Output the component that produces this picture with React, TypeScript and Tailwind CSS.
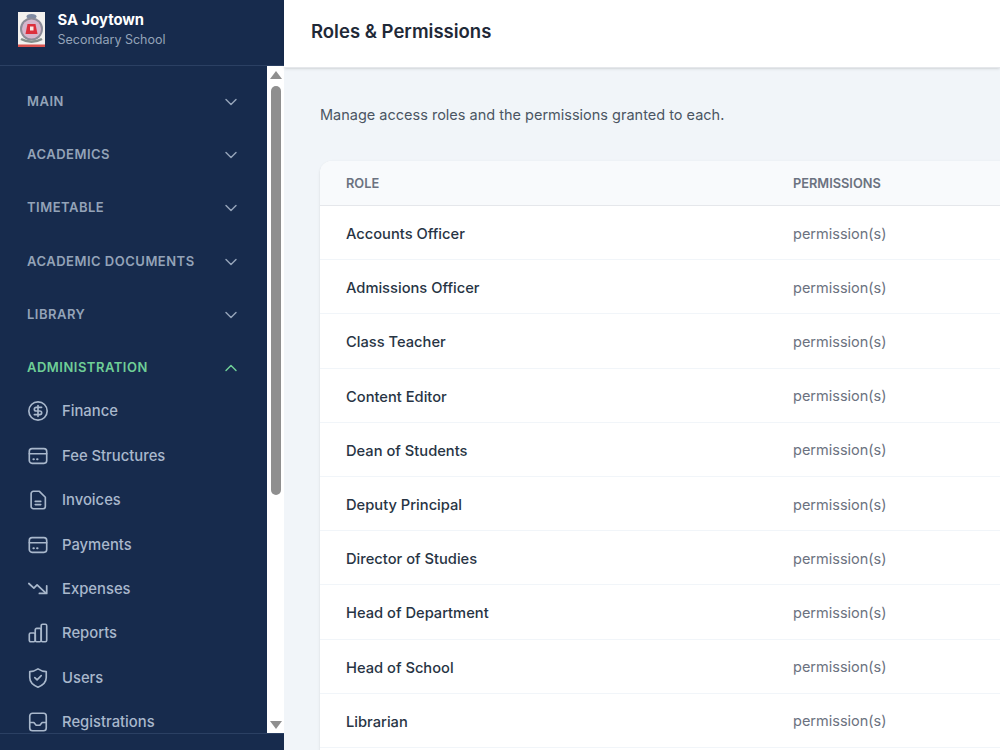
import { ChevronDown, ChevronUp, CircleDollarSign } from 'lucide-react'
import type { ReactNode } from 'react'

const sections = ['MAIN', 'ACADEMICS', 'TIMETABLE', 'ACADEMIC DOCUMENTS', 'LIBRARY']

const roles = [
  'Accounts Officer',
  'Admissions Officer',
  'Class Teacher',
  'Content Editor',
  'Dean of Students',
  'Deputy Principal',
  'Director of Studies',
  'Head of Department',
  'Head of School',
  'Librarian',
]

function CardIcon() {
  return (
    <svg viewBox="0 0 24 24" fill="none" stroke="currentColor" strokeWidth={1.8} strokeLinecap="round" className="size-[22px]">
      <rect x="2.500" y="4" width="19" height="16" rx="3" />
      <path d="M2.500 9.500h19" />
      <path d="M7 15.500h.5M11 15.500h.5" strokeWidth={2.2} />
    </svg>
  )
}

function DocIcon() {
  return (
    <svg viewBox="0 0 24 24" fill="none" stroke="currentColor" strokeWidth={1.8} strokeLinecap="round" strokeLinejoin="round" className="size-[22px]">
      <path d="M7 2.500h6.500L20 9v10a2.500 2.500 0 0 1-2.500 2.500h-10.500A2.500 2.500 0 0 1 4.500 19V5A2.500 2.500 0 0 1 7 2.500z" />
      <path d="M9 13.500h6M9 17h6" />
    </svg>
  )
}

function ExpensesIcon() {
  return (
    <svg viewBox="0 0 24 24" fill="none" stroke="currentColor" strokeWidth={1.9} strokeLinecap="round" strokeLinejoin="round" className="size-[22px]">
      <path d="M2 6l5.500 5 3.500-3.500 9 8.500" />
      <path d="M21.500 8.500v8.300h-8" />
    </svg>
  )
}

function BarsIcon() {
  return (
    <svg viewBox="0 0 24 24" fill="none" stroke="currentColor" strokeWidth={1.8} strokeLinejoin="round" className="size-[22px]">
      <rect x="2.500" y="12" width="6.500" height="9.500" rx="1.500" />
      <rect x="9" y="7" width="6.500" height="14.500" rx="1.500" />
      <rect x="15.500" y="2.500" width="6" height="19" rx="1.500" />
    </svg>
  )
}

function ShieldIcon() {
  return (
    <svg viewBox="0 0 24 24" fill="none" stroke="currentColor" strokeWidth={1.8} strokeLinecap="round" strokeLinejoin="round" className="size-[22px]">
      <path d="M12 2C9 4 6 5 3 5v6.500C3 16.500 7 20 12 22c5-2 9-5.500 9-10.500V5c-3 0-6-1-9-3z" />
      <path d="M8.500 11.500l2.500 2.500 4.500-4.500" />
    </svg>
  )
}

function InboxIcon() {
  return (
    <svg viewBox="0 0 24 24" fill="none" stroke="currentColor" strokeWidth={1.8} strokeLinejoin="round" strokeLinecap="round" className="size-[22px]">
      <rect x="3" y="2.500" width="18" height="19" rx="3" />
      <path d="M3 12.500h4.500l2.500 3h4l2.500-3H21" />
    </svg>
  )
}

function Crest() {
  return (
    <svg viewBox="0 0 27 35" className="h-[35px] w-[27px] shrink-0">
      <rect width="27" height="35" fill="#f3f1ee" />
      <ellipse cx="13.500" cy="4.500" rx="5" ry="2.500" fill="#7f8ba3" />
      <circle cx="13.500" cy="17" r="11.500" fill="#8d8c98" />
      <circle cx="13.500" cy="17" r="9.500" fill="#d6b6cc" />
      <path d="M9.500 12h8l2 10h-12z" fill="#dc2f3c" />
      <rect x="12" y="14.500" width="3.500" height="4" fill="#f8e8e4" />
      <path d="M3 27c6 3.500 15 3.500 21 0" stroke="#85908c" strokeWidth="2.500" fill="none" />
      <rect y="32.500" width="27" height="2.500" fill="#d9534f" />
    </svg>
  )
}

const adminItems: { label: string; icon: ReactNode }[] = [
  { label: 'Finance', icon: <CircleDollarSign className="size-[22px]" strokeWidth={1.8} /> },
  { label: 'Fee Structures', icon: <CardIcon /> },
  { label: 'Invoices', icon: <DocIcon /> },
  { label: 'Payments', icon: <CardIcon /> },
  { label: 'Expenses', icon: <ExpensesIcon /> },
  { label: 'Reports', icon: <BarsIcon /> },
  { label: 'Users', icon: <ShieldIcon /> },
  { label: 'Registrations', icon: <InboxIcon /> },
]

function Sidebar() {
  return (
    <aside className="flex h-[750px] w-[284px] shrink-0 flex-col bg-[#172b4d]">
      {/* Brand */}
      <div className="flex h-[66px] shrink-0 items-center gap-[12.500px] border-b border-[#2b4063] pb-[6px] pl-[18px]">
        <Crest />
        <div>
          <div className="text-[14.800px] leading-[20px] font-bold text-white">SA Joytown</div>
          <div className="text-[12.500px] leading-[20px] text-[#94a3b8]">Secondary School</div>
        </div>
      </div>

      <div className="flex min-h-0 flex-1">
        <nav className="min-w-0 flex-1 overflow-hidden">
          {sections.map((s) => (
            <div key={s} className="flex h-[53.3px] items-center justify-between pr-[26px] pl-[27px] first:mt-[9px]">
              <span className="text-[13px] font-semibold tracking-[0.5px] text-[#94a3b8]">{s}</span>
              <ChevronDown className="size-5 text-[#94a3b8]" strokeWidth={1.75} />
            </div>
          ))}
          <div className="flex h-[53.3px] items-center justify-between pr-[26px] pl-[27px]">
            <span className="text-[13px] font-semibold tracking-[0.5px] text-[#6fcf97]">ADMINISTRATION</span>
            <ChevronUp className="size-5 text-[#6fcf97]" strokeWidth={1.75} />
          </div>
          {adminItems.map((item) => (
            <div key={item.label} className="-mt-[5.500px] mb-[5.500px] flex h-[44.4px] items-center gap-[13.500px] pl-[26.500px] text-[#a9b8cc]">
              {item.icon}
              <span className="text-[14.800px] font-medium">{item.label}</span>
            </div>
          ))}
        </nav>

        {/* Scrollbar */}
        <div className="flex w-[17px] shrink-0 flex-col items-center justify-between bg-white pt-[5px] pb-[4px]">
          <div className="flex w-full flex-col items-center gap-[7px]">
            <div className="h-0 w-0 border-x-[6px] border-b-[8px] border-x-transparent border-b-[#8f8f8f]" />
            <div className="h-[409px] w-[10px] rounded-[5px] bg-[#8f8f8f]" />
          </div>
          <div className="h-0 w-0 border-x-[6px] border-t-[8px] border-x-transparent border-t-[#8f8f8f]" />
        </div>
      </div>

      <div className="h-[17px] shrink-0 border-t border-[#2b4063]" />
    </aside>
  )
}

export default function App() {
  return (
    <div className="flex h-[750px] w-[1000px] overflow-hidden bg-[#f1f5f9] font-['Inter',sans-serif]">
      <Sidebar />

      <main className="min-w-0 flex-1">
        <header className="flex h-[68px] items-center border-b border-[#e5e7eb] bg-white pl-[27px] shadow-sm">
          <h1 className="pb-[3px] text-[18.500px] font-semibold text-[#1f2937]">Roles &amp; Permissions</h1>
        </header>

        <div className="pt-[36px] pl-[36px]">
          <p className="text-[14.500px] leading-[22px] text-[#4b5563]">
            Manage access roles and the permissions granted to each.
          </p>

          <div className="mt-[35px] w-[800px] overflow-hidden rounded-xl bg-white shadow-sm">
            <table className="w-full border-collapse">
              <thead>
                <tr className="h-[44.500px] border-b border-[#e5e7eb] bg-[#f8fafc] text-left">
                  <th className="w-[473px] pt-[2px] pl-[26px] text-[12.800px] font-semibold text-[#6b7280]">ROLE</th>
                  <th className="pt-[2px] text-[12.800px] font-semibold text-[#6b7280]">PERMISSIONS</th>
                </tr>
              </thead>
              <tbody>
                {roles.map((role) => (
                  <tr key={role} className="h-[54.2px] border-b border-[#f1f5f9]">
                    <td className="pt-[3px] pl-[26px] text-[14.700px] font-medium text-[#273444]">{role}</td>
                    <td className="pt-[2px] text-[14.500px] text-[#6b7280]">permission(s)</td>
                  </tr>
                ))}
                <tr className="h-[54.2px]">
                  <td colSpan={2} />
                </tr>
              </tbody>
            </table>
          </div>
        </div>
      </main>
    </div>
  )
}
